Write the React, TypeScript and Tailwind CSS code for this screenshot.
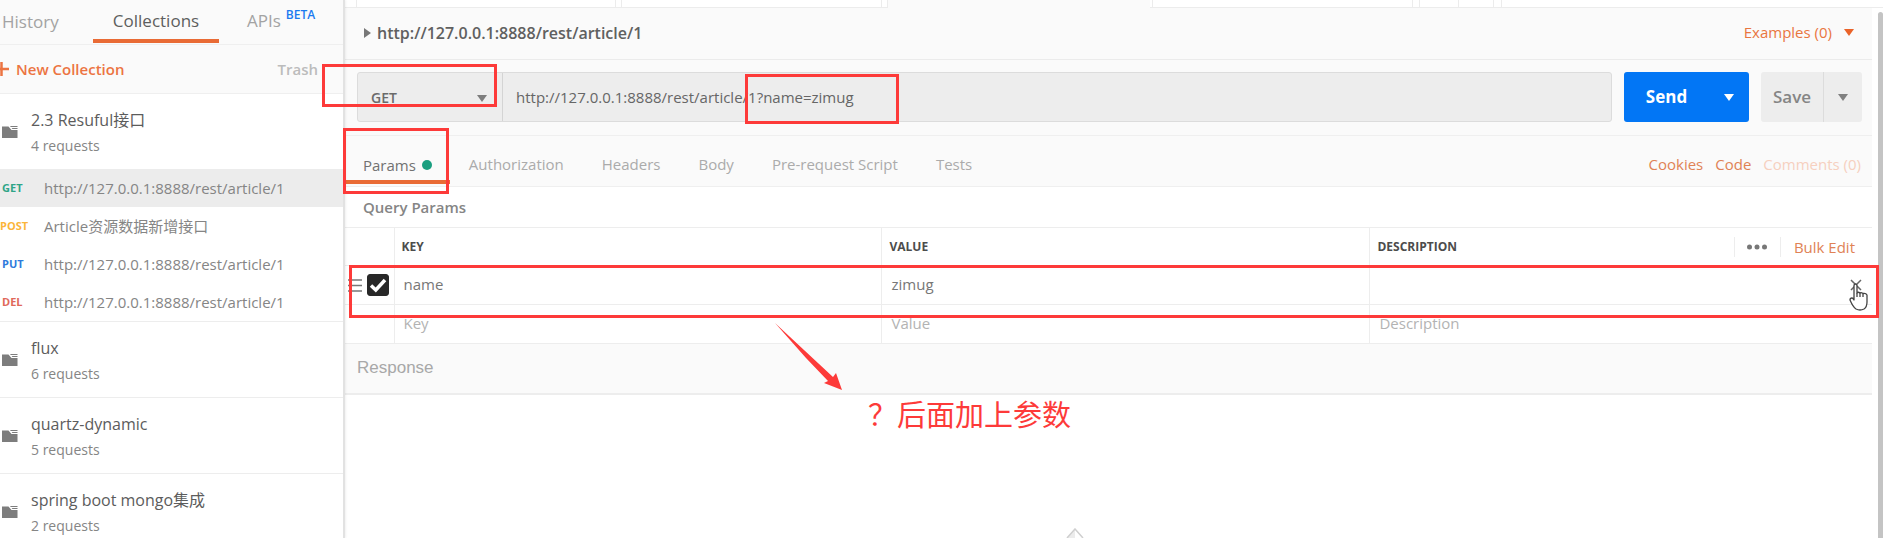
import { useState } from 'react'

// Sidebar data
interface RequestItem {
  method: 'GET' | 'POST' | 'PUT' | 'DEL'
  name: string
  active?: boolean
}

interface Collection {
  name: string
  count: number
  requests?: RequestItem[]
}

const REQUEST_URL = 'http://127.0.0.1:8888/rest/article/1'

const COLLECTIONS: Collection[] = [
  {
    name: '2.3 Resuful接口',
    count: 4,
    requests: [
      { method: 'GET', name: REQUEST_URL, active: true },
      { method: 'POST', name: 'Article资源数据新增接口' },
      { method: 'PUT', name: REQUEST_URL },
      { method: 'DEL', name: REQUEST_URL },
    ],
  },
  { name: 'flux', count: 6 },
  { name: 'quartz-dynamic', count: 5 },
  { name: 'spring boot mongo集成', count: 2 },
]

const METHOD_COLORS = {
  GET: 'text-[#2fa587]',
  POST: 'text-[#fbb53a]',
  PUT: 'text-[#2f7bdc]',
  DEL: 'text-[#e0695a]',
}

const REQUEST_TABS = ['Authorization', 'Headers', 'Body', 'Pre-request Script', 'Tests']

// Icons
function Caret({ className }: { className: string }) {
  return (
    <svg viewBox="0 0 10 7" className={`h-[7px] w-[10px] ${className}`} fill="currentColor" aria-hidden="true">
      <path d="M0 0h10L5 7z" />
    </svg>
  )
}

function FolderIcon() {
  return (
    <svg viewBox="0 0 16 12" className="h-3 w-4 shrink-0 text-[#7d7d7d]" fill="currentColor" aria-hidden="true">
      <path d="M0 .5h6.500L9.500 4H15.500v8H0z" />
      <path d="M8 0h7.500v1H8.800zM9.600 2H15.500v1H10.400z" />
    </svg>
  )
}

function Sidebar() {
  return (
    <aside className="relative z-10 flex w-[345px] shrink-0 flex-col border-r-2 border-[#e2e2e2] bg-white shadow-[1px_0_2px_rgba(0,0,0,0.06)]">
      <nav className="flex h-[45px] shrink-0 border-b border-[#efefef] bg-[#fafafa] text-[17px] text-[#a3a3a3]">
        <button className="w-[93px] pl-[2px] text-left">History</button>
        <button className="h-[43px] w-[126px] border-b-4 border-[#e96b35] pt-[2px] text-[#5e5e5e]">Collections</button>
        <button className="flex items-start pt-2 pl-7">
          APIs
          <span className="-mt-[2px] pl-[5px] text-[12px] font-semibold text-[#1a7af0]">BETA</span>
        </button>
      </nav>

      <div className="flex h-[49px] shrink-0 items-center justify-between border-b border-[#efefef] bg-[#fafafa] pr-[25px] text-[15px]">
        <button className="flex items-center gap-[7px] font-semibold text-[#ec7442]">
          <svg viewBox="0 0 9 14" className="h-[14px] w-[9px]" stroke="currentColor" strokeWidth="2.500" aria-hidden="true">
            <path d="M1.500 0v14M0 7h9" />
          </svg>
          New Collection
        </button>
        <button className="font-semibold text-[#bcbcbc]">Trash</button>
      </div>

      {COLLECTIONS.map((collection) => (
        <section key={collection.name} className="shrink-0 border-b border-[#ededed]">
          <div className="flex h-[75px] items-center gap-[13px] pl-[2px]">
            <FolderIcon />
            <div>
              <div className="text-[16px] leading-6 text-[#5c5c5c]">{collection.name}</div>
              <div className="pt-1 text-[14px] leading-5 text-[#858585]">{collection.count} requests</div>
            </div>
          </div>
          {collection.requests?.map((request, i) => (
            <button
              key={i}
              className={`flex h-[38px] w-full items-center text-left text-[15px] text-[#858585] ${request.active ? 'bg-[#ececec]' : ''}`}
            >
              <span className={`w-11 text-[11px] font-bold ${request.method === 'POST' ? '' : 'pl-[2px]'} ${METHOD_COLORS[request.method]}`}>
                {request.method}
              </span>
              {request.name}
            </button>
          ))}
        </section>
      ))}
    </aside>
  )
}

// Bottom edges of the open request tabs
function TabStrip() {
  const tab = 'border-r border-b border-[#ececec] bg-white'

  return (
    <div className="flex h-2 bg-[#fafafa]">
      <div className={`w-3 ${tab}`} />
      <div className={`w-[259px] ${tab}`} />
      <div className={`w-[6px] ${tab}`} />
      <div className={`w-[260px] ${tab}`} />
      <div className={`w-[6px] ${tab}`} />
      <div className="w-[262px]" />
      <div className={`w-[3px] ${tab}`} />
      <div className={`w-[260px] ${tab}`} />
      <div className={`w-[7px] ${tab}`} />
      <div className={`w-[39px] ${tab}`} />
      <div className={`w-[35px] ${tab}`} />
      <div className={`w-2 ${tab}`} />
      <div className="flex-1 border-b border-[#ececec] bg-white" />
    </div>
  )
}

function UrlBar() {
  const [url, setUrl] = useState(`${REQUEST_URL}?name=zimug`)

  return (
    <div className="flex h-[76px] items-start border-b border-[#efefef] pt-3 pr-[10px] pl-3">
      <div className="flex h-[50px] flex-1 rounded-[3px] border border-[#dcdcdc] bg-[#ededed]">
        <div className="relative w-[145px] border-r border-[#d4d4d4]">
          <select aria-label="Method" className="h-full w-full appearance-none pl-[13px] text-[14px] font-semibold text-[#6a6a6a]">
            <option>GET</option>
            <option>POST</option>
            <option>PUT</option>
          </select>
          <Caret className="pointer-events-none absolute top-[22px] right-[15px] text-[#7d7d7d]" />
        </div>
        <input
          aria-label="Request URL"
          value={url}
          onChange={(e) => setUrl(e.target.value)}
          className="min-w-0 flex-1 pl-[13px] text-[15px] text-[#666] outline-none"
        />
      </div>
      <div className="ml-3 flex h-[50px] w-[125px] rounded-[3px] bg-[#0276f5] text-white">
        <button className="flex-1 text-[17px] font-bold">Send</button>
        <button aria-label="Send options" className="grid w-10 place-items-center">
          <Caret className="text-white" />
        </button>
      </div>
      <div className="ml-3 flex h-[50px] w-[101px] rounded-[3px] bg-[#ededed] text-[#858585]">
        <button className="flex-1 text-[17px] font-semibold">Save</button>
        <button aria-label="Save options" className="grid w-[39px] place-items-center border-l border-[#dcdcdc]">
          <Caret className="text-[#808080]" />
        </button>
      </div>
    </div>
  )
}

function ParamsTable() {
  const [enabled, setEnabled] = useState(true)
  const cell = 'h-[38px] w-full pb-[2px] pl-[9px] text-[15px] text-[#777] outline-none placeholder:text-[#b3b3b3]'

  return (
    <table className="w-full table-fixed border-collapse">
      <colgroup>
        <col className="w-[49px]" />
        <col />
        <col />
        <col />
        <col className="w-[14px]" />
      </colgroup>
      <thead>
        <tr className="border-y border-[#ededed] text-left text-[12px] text-[#4c4c4c]">
          <th className="h-[38px]" />
          <th className="border-l border-[#ededed] pl-[7px] font-bold">KEY</th>
          <th className="border-l border-[#ededed] pl-[7px] font-bold">VALUE</th>
          <th colSpan={2} className="border-l border-[#ededed] pl-[7px] font-bold">
            <div className="flex items-center">
              <span className="flex-1">DESCRIPTION</span>
              <button aria-label="More options" className="grid h-5 w-[46px] place-items-center border-l border-[#ededed] text-[#777]">
                <svg viewBox="0 0 20 6" className="h-[6px] w-5" fill="currentColor" aria-hidden="true">
                  <circle cx="2.500" cy="3" r="2.500" />
                  <circle cx="10" cy="3" r="2.500" />
                  <circle cx="17.500" cy="3" r="2.500" />
                </svg>
              </button>
              <button className="h-5 border-l border-[#ededed] pr-[17px] pl-[13px] text-[15px] leading-5 font-normal text-[#e08255]">
                Bulk Edit
              </button>
            </div>
          </th>
        </tr>
      </thead>
      <tbody>
        <tr className="border-b border-[#ededed]">
          <td>
            <div className="flex items-center gap-[5px] pl-[3px]">
              <svg viewBox="0 0 14 13" className="h-[13px] w-[14px] text-[#777]" stroke="currentColor" strokeWidth="1.500" aria-hidden="true">
                <path d="M0 1h14M0 6.500h14M0 12h14" />
              </svg>
              <label className="relative block h-[22px] w-[22px]">
                <input
                  type="checkbox"
                  aria-label="Enable name"
                  checked={enabled}
                  onChange={(e) => setEnabled(e.target.checked)}
                  className="block h-[22px] w-[22px] appearance-none rounded-[3px] border border-[#282828] checked:bg-[#282828]"
                />
                {enabled && (
                  <svg viewBox="0 0 22 22" className="pointer-events-none absolute inset-0 h-[22px] w-[22px]" fill="none" stroke="white" strokeWidth="3.500" aria-hidden="true">
                    <path d="M4 11.500L8.800 16L18 6" />
                  </svg>
                )}
              </label>
            </div>
          </td>
          <td className="border-l border-[#ededed]">
            <input aria-label="Key 1" className={cell} defaultValue="name" />
          </td>
          <td className="border-l border-[#ededed]">
            <input aria-label="Value 1" className={cell} defaultValue="zimug" />
          </td>
          <td className="border-l border-[#ededed]">
            <input aria-label="Description 1" className={cell} />
          </td>
          <td>
            <button aria-label="Delete row" className="-ml-2 block text-[#666]">
              <svg viewBox="0 0 12 12" className="h-3 w-3" stroke="currentColor" strokeWidth="1.500" aria-hidden="true">
                <path d="M1 1l10 10M11 1L1 11" />
              </svg>
            </button>
          </td>
        </tr>
        <tr className="border-b border-[#ededed]">
          <td />
          <td className="border-l border-[#ededed]">
            <input aria-label="New key" className={cell} placeholder="Key" />
          </td>
          <td className="border-l border-[#ededed]">
            <input aria-label="New value" className={cell} placeholder="Value" />
          </td>
          <td className="border-l border-[#ededed]">
            <input aria-label="New description" className={cell} placeholder="Description" />
          </td>
          <td />
        </tr>
      </tbody>
    </table>
  )
}

// Red marks drawn over the window
function Annotations() {
  return (
    <div className="pointer-events-none absolute inset-0 z-20">
      <div className="absolute top-16 left-[322px] h-[43px] w-[175px] border-3 border-[#fd3a39]" />
      <div className="absolute top-[128px] left-[343px] h-[66px] w-[106px] border-3 border-[#fd3a39]" />
      <div className="absolute top-[74px] left-[745px] h-[50px] w-[154px] border-3 border-[#fd3a39]" />
      <div className="absolute top-[265px] right-1 left-[349px] h-[53px] border-3 border-[#fd3a39]" />
      <svg viewBox="0 0 68 68" className="absolute top-[323px] left-[775px] h-[68px] w-[68px] text-[#fd3a39]" fill="currentColor" aria-hidden="true">
        <path d="M0 0L58 54L61 50L67 67L49 60L53 58L31 35z" />
      </svg>
      <p className="absolute top-[395px] left-[868px] text-[29px] leading-10 text-[#fd3a39]">？后面加上参数</p>
      <svg viewBox="0 0 20 28" className="absolute top-[283px] right-[14px] h-7 w-5" fill="white" stroke="#444" strokeWidth="1.300" strokeLinejoin="round" aria-hidden="true">
        <path d="M5 17V3q0-2 1.500-2T8 3v7q1-1.500 3 0 1-1 3 .500 3-.500 4 1.500v7q0 5-3 7-4 2-8 0-3-2-6-9 0-2 2-2 1 0 2 2z" />
        <path d="M8 10v4M11 10v4M14 11v3" />
      </svg>
    </div>
  )
}

function App() {
  return (
    <div className="relative flex h-screen overflow-hidden bg-white font-['Open_Sans','Noto_Sans_CJK_SC',sans-serif]">
      <Sidebar />

      <div className="flex min-w-0 flex-1 flex-col">
        <TabStrip />

        <div className="flex flex-1">
          <main className="min-w-0 flex-1">
            <div className="bg-[#fafafa]">
              {/* Request title */}
              <header className="flex h-[52px] items-center justify-between border-b border-[#ebebeb] pr-[18px] pb-[2px] pl-[19px]">
                <h1 className="flex items-center gap-[6px] text-[16px] font-semibold text-[#606060]">
                  <svg viewBox="0 0 7 10" className="h-[10px] w-[7px] text-[#777]" fill="currentColor" aria-hidden="true">
                    <path d="M0 0v10l7-5z" />
                  </svg>
                  {REQUEST_URL}
                </h1>
                <button className="flex items-center gap-3 text-[15px] text-[#e9763f]">
                  Examples (0)
                  <Caret className="text-[#ea6329]" />
                </button>
              </header>

              <UrlBar />

              {/* Request tabs */}
              <div className="flex h-[51px] items-stretch border-b border-[#efefef] pr-[11px] text-[15px] text-[#ababab]">
                <button className="mb-[2px] flex items-center gap-[6px] border-b-4 border-[#e96b35] px-[18px] pt-[14px] text-[#717171]">
                  Params
                  <span className="h-[10px] w-[10px] rounded-full bg-[#1a9f80]" />
                </button>
                {REQUEST_TABS.map((tab) => (
                  <button key={tab} className="px-[19px] pt-[7px]">
                    {tab}
                  </button>
                ))}
                <div className="ml-auto flex items-center gap-3 pt-[7px] text-[#e08255]">
                  <a href="#cookies">Cookies</a>
                  <a href="#code">Code</a>
                  <a href="#comments" className="text-[#f6d0bf]">Comments (0)</a>
                </div>
              </div>
            </div>

            <h2 className="flex h-10 items-center pl-[18px] text-[15px] font-semibold text-[#858585]">Query Params</h2>
            <ParamsTable />

            <div className="flex h-[51px] items-center border-b-2 border-[#ededed] bg-[#fafafa] pb-[2px] pl-3 font-['Liberation_Sans',sans-serif] text-[17px] text-[#a8a8a8]">
              Response
            </div>
          </main>

          {/* Scrollbar */}
          <div className="w-[11px] shrink-0 pt-1 pl-[6px]">
            <div className="h-full rounded-t-[3px] bg-[#c4c4c4]" />
          </div>
        </div>
      </div>

      {/* Tip of the empty response picture */}
      <svg viewBox="0 0 18 10" className="absolute bottom-0 left-[1066px] h-[10px] w-[18px]" fill="none" stroke="#cfcfcf" strokeWidth="1.500" aria-hidden="true">
        <path d="M1 10L9 1V10z" fill="#ececec" stroke="none" />
        <path d="M1 10L9 1L17 10" />
      </svg>

      <Annotations />
    </div>
  )
}

export default App
